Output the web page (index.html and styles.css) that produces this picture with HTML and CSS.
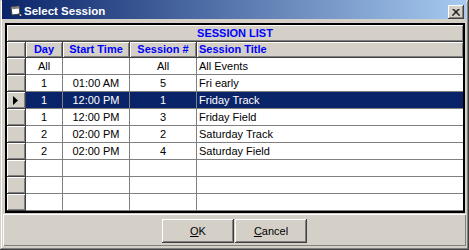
FILE: index.html
```html
<!DOCTYPE html>
<html lang="en">
<head>
    <meta charset="UTF-8">
    <title>Select Session</title>
    <link rel="stylesheet" href="styles.css">
</head>
<body>
    <div class="window">
        <div class="titlebar">
            <svg class="title-icon" width="13" height="12" viewBox="0 0 13 12">
                <path d="M1 2 L9 1 L10 9 L2 10 Z" fill="#fff" stroke="#404040"/>
                <path d="M2 2 L9 1.5 L9.3 3.5 L2.3 4.2 Z" fill="#808080"/>
                <path d="M9 8 L12.5 10.5 L9.5 11.5 Z" fill="#fff" stroke="#000" stroke-width="0.6"/>
            </svg>
            <span class="title-text">Select Session</span>
            <button class="close-btn">
                <svg width="8" height="7" viewBox="0 0 8 7">
                    <path d="M0.5 0 L7.5 7 M1.5 0 L8 6.5 M7.5 0 L0.5 7 M6.5 0 L0 6.5" stroke="#000" stroke-width="1"/>
                </svg>
            </button>
        </div>

        <div class="grid">
            <div class="caption">SESSION LIST</div>
            <div class="row head">
                <div class="cell rh"></div>
                <div class="cell c-day">Day</div>
                <div class="cell c-time">Start Time</div>
                <div class="cell c-num">Session #</div>
                <div class="cell c-title">Session Title</div>
            </div>
            <div class="row">
                <div class="cell rh"></div>
                <div class="cell c-day">All</div>
                <div class="cell c-time"></div>
                <div class="cell c-num">All</div>
                <div class="cell c-title">All Events</div>
            </div>
            <div class="row">
                <div class="cell rh"></div>
                <div class="cell c-day">1</div>
                <div class="cell c-time">01:00 AM</div>
                <div class="cell c-num">5</div>
                <div class="cell c-title">Fri early</div>
            </div>
            <div class="row selected">
                <div class="cell rh">
                    <svg width="6" height="9" viewBox="0 0 6 9"><path d="M0 0 L5 4.5 L0 9 Z" fill="#000"/></svg>
                </div>
                <div class="cell c-day">1</div>
                <div class="cell c-time">12:00 PM</div>
                <div class="cell c-num">1</div>
                <div class="cell c-title">Friday Track</div>
            </div>
            <div class="row">
                <div class="cell rh"></div>
                <div class="cell c-day">1</div>
                <div class="cell c-time">12:00 PM</div>
                <div class="cell c-num">3</div>
                <div class="cell c-title">Friday Field</div>
            </div>
            <div class="row">
                <div class="cell rh"></div>
                <div class="cell c-day">2</div>
                <div class="cell c-time">02:00 PM</div>
                <div class="cell c-num">2</div>
                <div class="cell c-title">Saturday Track</div>
            </div>
            <div class="row">
                <div class="cell rh"></div>
                <div class="cell c-day">2</div>
                <div class="cell c-time">02:00 PM</div>
                <div class="cell c-num">4</div>
                <div class="cell c-title">Saturday Field</div>
            </div>
            <div class="row">
                <div class="cell rh"></div>
                <div class="cell c-day"></div>
                <div class="cell c-time"></div>
                <div class="cell c-num"></div>
                <div class="cell c-title"></div>
            </div>
            <div class="row">
                <div class="cell rh"></div>
                <div class="cell c-day"></div>
                <div class="cell c-time"></div>
                <div class="cell c-num"></div>
                <div class="cell c-title"></div>
            </div>
            <div class="row">
                <div class="cell rh"></div>
                <div class="cell c-day"></div>
                <div class="cell c-time"></div>
                <div class="cell c-num"></div>
                <div class="cell c-title"></div>
            </div>
        </div>

        <div class="panel">
            <button class="btn"><u>O</u>K</button>
            <button class="btn"><u>C</u>ancel</button>
        </div>
    </div>
</body>
</html>
```

FILE: styles.css
```css
body {
    margin: 0;
    background-color: #d4d0c8;
    font-family: "Liberation Sans", Arial, sans-serif;
    font-size: 11px;
    color: #000;
}

.window {
    width: 469px;
    height: 250px;
    box-sizing: border-box;
    padding: 0 3px 4px 2px;
    background-color: #d4d0c8;
    box-shadow: inset -1px -1px #404040, inset 1px 1px #d4d0c8,
                inset -2px -2px #808080, inset 2px 2px #fff;
    display: flex;
    flex-direction: column;
}

/* title bar */
.titlebar {
    height: 19px;
    flex: none;
    display: flex;
    align-items: flex-start;
    padding: 0 2px 0 8px;
    background: linear-gradient(to right, #0a246a, #a6caf0);
    color: #fff;
}

.title-icon {
    margin-top: 5px;
}

.title-text {
    margin: 5px 0 0 1px;
    font-weight: bold;
    font-size: 11.5px;
    line-height: 13px;
}

.close-btn {
    margin: 5px 0 0 auto;
    width: 16px;
    height: 14px;
    padding: 0;
    border: none;
    background-color: #d4d0c8;
    box-shadow: inset -1px -1px #404040, inset 1px 1px #fff,
                inset -2px -2px #808080;
    display: flex;
    align-items: center;
    justify-content: center;
}

/* grid */
.grid {
    margin: 4px 1px 0 3px;
    border: 2px solid #000;
    background-color: #fff;
}

.caption {
    height: 16px;
    line-height: 16px;
    border-bottom: 1px solid #404040;
    background-color: #d4d0c8;
    box-shadow: inset 1px 1px #fff, inset -1px -1px #808080;
    color: #0000ff;
    font-weight: bold;
    text-align: center;
}

.row {
    display: flex;
    height: 17px;
}

.cell {
    box-sizing: border-box;
    height: 17px;
    line-height: 16px;
    border-right: 1px solid #808080;
    border-bottom: 1px solid #808080;
    text-align: center;
    white-space: nowrap;
    overflow: hidden;
}

.rh {
    width: 19px;
    background-color: #d4d0c8;
    border-color: #404040;
    box-shadow: inset 1px 1px #fff, inset -1px -1px #808080;
    display: flex;
    align-items: center;
    justify-content: center;
}

.c-day { width: 37px; }
.c-time { width: 67px; }
.c-num { width: 67px; }
.c-title {
    width: 266px;
    text-align: left;
    padding-left: 2px;
    border-right: none;
}

.head {
    height: 16px;
}

.head .cell {
    height: 16px;
    line-height: 15px;
    background-color: #d4d0c8;
    border-color: #404040;
    box-shadow: inset 1px 1px #fff, inset -1px -1px #808080;
    color: #0000ff;
    font-weight: bold;
}

.head .c-title {
    border-right: none;
}

.selected .cell {
    background-color: #0a246a;
    color: #fff;
}

.selected .rh {
    background-color: #d4d0c8;
}

/* buttons */
.panel {
    margin: 1px 0 0 1px;
    height: 32px;
    box-sizing: border-box;
    padding-top: 5px;
    display: flex;
    justify-content: center;
    gap: 1px;
    box-shadow: inset 1px 1px #fff, inset -1px -1px #808080;
}

.btn {
    width: 72px;
    height: 24px;
    padding: 0;
    border: none;
    background-color: #d4d0c8;
    box-shadow: inset -1px -1px #404040, inset 1px 1px #fff,
                inset -2px -2px #808080;
    font-family: "Liberation Sans", Arial, sans-serif;
    font-size: 11px;
    color: #000;
}
```
